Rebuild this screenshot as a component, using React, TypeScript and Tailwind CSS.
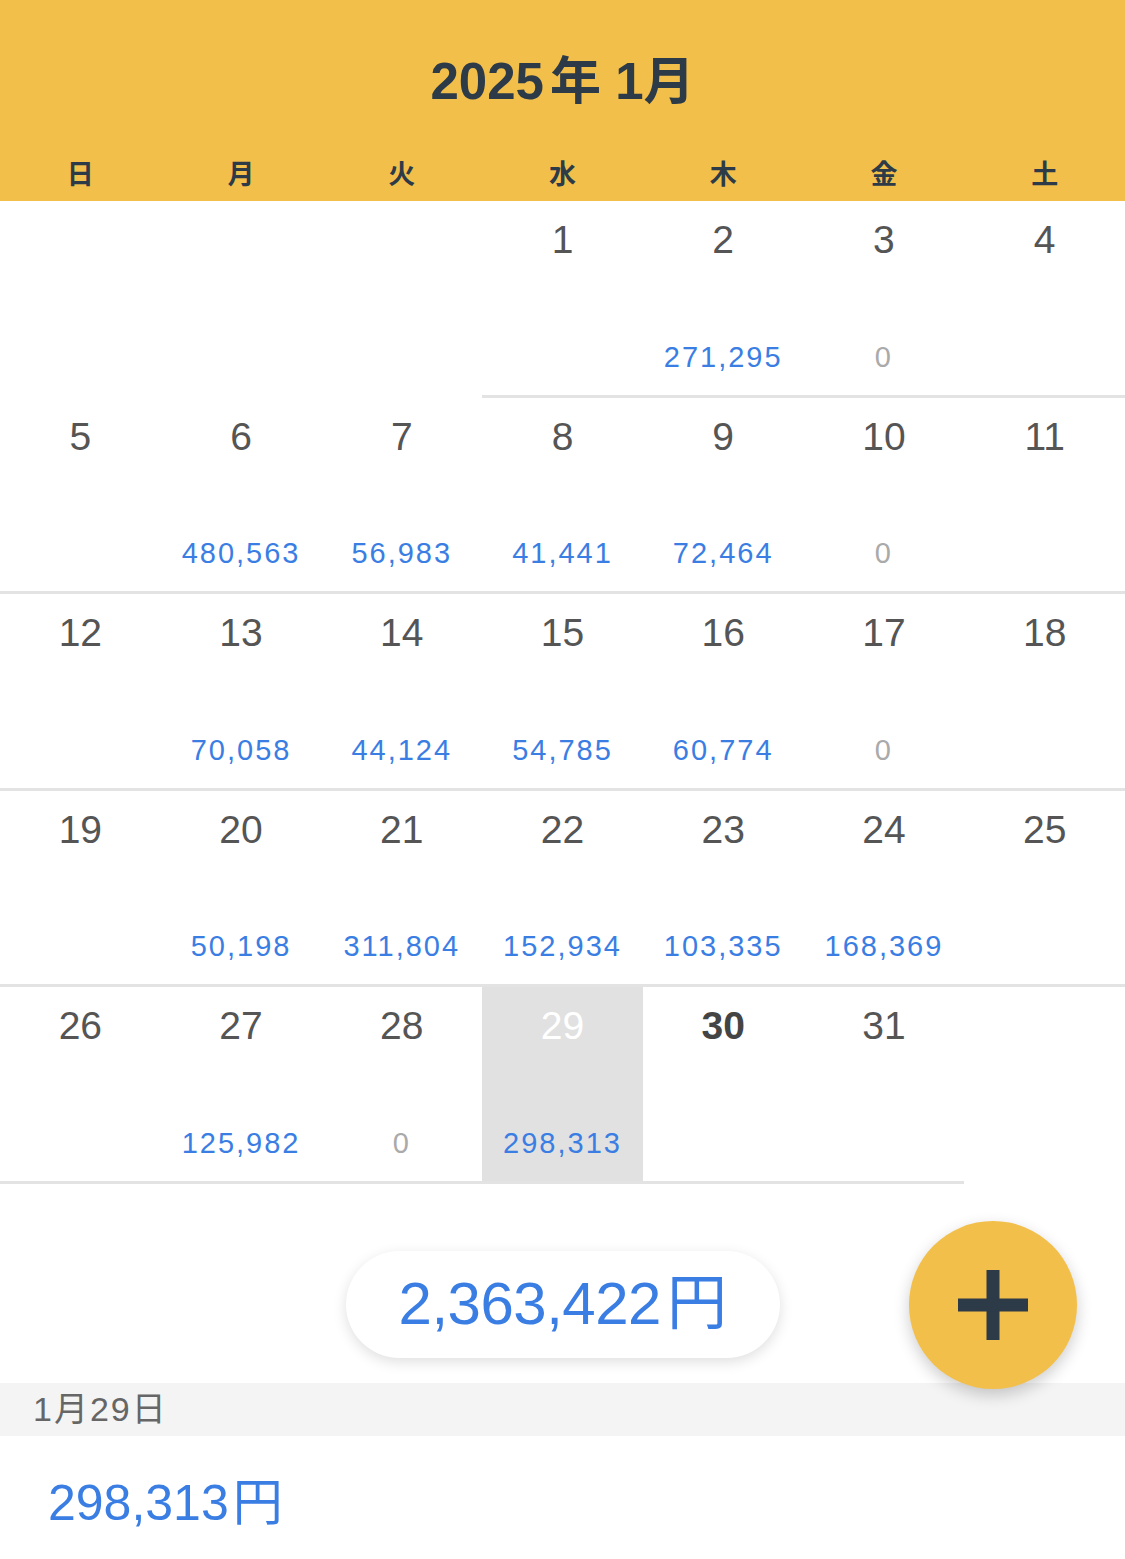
import React from "react";

type Day = { day: number; amount?: number };

const WEEKDAYS = ["日", "月", "火", "水", "木", "金", "土"];

// daily totals for January 2025
const AMOUNTS: Record<number, number> = {
  2: 271295, 3: 0,
  6: 480563, 7: 56983, 8: 41441, 9: 72464, 10: 0,
  13: 70058, 14: 44124, 15: 54785, 16: 60774, 17: 0,
  20: 50198, 21: 311804, 22: 152934, 23: 103335, 24: 168369,
  27: 125982, 28: 0, 29: 298313,
};

const SELECTED = 29;
const TODAY = 30;
const FIRST_WEEKDAY = 3; // 2025-01-01 is a Wednesday
const DAYS_IN_MONTH = 31;

const fmt = (n: number) => n.toLocaleString("en-US");

const buildCells = (): (Day | null)[] => {
  const cells: (Day | null)[] = [];
  for (let i = 0; i < FIRST_WEEKDAY; i++) cells.push(null);
  for (let d = 1; d <= DAYS_IN_MONTH; d++) cells.push({ day: d, amount: AMOUNTS[d] });
  while (cells.length % 7 !== 0) cells.push(null);
  return cells;
};

const DayCell = ({ cell }: { cell: Day | null }) => {
  if (!cell) return <div className="h-[196.6px]" />;
  const selected = cell.day === SELECTED;
  const today = cell.day === TODAY;
  return (
    <div
      className={`h-[196.6px] border-b-[3px] border-[#e3e3e3] flex flex-col items-center justify-between pt-[19px] pb-[23px] ${
        selected ? "bg-[#e1e1e1]" : "bg-white"
      }`}
    >
      <span
        className={`text-[39px] leading-none ${
          selected ? "text-white" : today ? "font-bold text-[#444]" : "text-[#555]"
        }`}
      >
        {cell.day}
      </span>
      {cell.amount !== undefined ? (
        <span
          className={`text-[29px] leading-none tracking-[2px] ${
            cell.amount === 0 ? "text-[#aaa]" : "text-[#3a7ee4]"
          }`}
        >
          {fmt(cell.amount)}
        </span>
      ) : (
        <span className="h-[29px]" />
      )}
    </div>
  );
};

const App = () => {
  const cells = buildCells();
  const total = Object.values(AMOUNTS).reduce((a, b) => a + b, 0);

  return (
    <div className="min-h-screen bg-white font-['Liberation_Sans','Noto_Sans_CJK_JP',sans-serif]">
      {/* Month header */}
      <div className="h-[201px] bg-[#f3bf4b] text-[#2d3a48] pt-[52px]">
        <h1 className="text-center text-[51px] leading-[60px] font-bold">
          2025<span className="ml-[6px]">年</span> 1月
        </h1>
        <div className="grid grid-cols-7 mt-[48px] h-[30px]">
          {WEEKDAYS.map((w) => (
            <div key={w} className="text-center text-[27px] leading-[30px] font-bold">
              {w}
            </div>
          ))}
        </div>
      </div>

      {/* Calendar grid */}
      <div className="grid grid-cols-7">
        {cells.map((c, i) => (
          <DayCell key={i} cell={c} />
        ))}
      </div>

      {/* Month total + add button */}
      <div className="relative h-[199px] pt-[67px] flex justify-center">
        <div className="h-[107px] w-[434px] rounded-full bg-white shadow-[0_4px_14px_rgba(0,0,0,0.13)] flex items-center justify-center">
          <span className="text-[60px] leading-none text-[#3a7ee4] tracking-[-0.5px]">
            {fmt(total)}
            <span className="ml-[6px]">円</span>
          </span>
        </div>
        <button className="absolute z-10 right-[48px] top-[37px] w-[168px] h-[168px] rounded-full bg-[#f3bf4b] shadow-[0_6px_16px_rgba(0,0,0,0.2)] flex items-center justify-center">
          <svg width="70" height="70" viewBox="0 0 70 70">
            <rect x="28.5" y="0" width="13" height="70" fill="#2d3a48" />
            <rect x="0" y="28.5" width="70" height="13" fill="#2d3a48" />
          </svg>
        </button>
      </div>

      {/* Selected day detail */}
      <div className="h-[53px] bg-[#f4f4f4] pl-[33px] flex items-center">
        <span className="text-[34px] leading-none text-[#666] tracking-[2px]">1月29日</span>
      </div>
      <div className="pl-[48px] pt-[42px]">
        <span className="text-[50px] leading-none text-[#3a7ee4]">
          {fmt(AMOUNTS[SELECTED])}
          <span className="ml-[4px]">円</span>
        </span>
      </div>
    </div>
  );
};

export default App;
